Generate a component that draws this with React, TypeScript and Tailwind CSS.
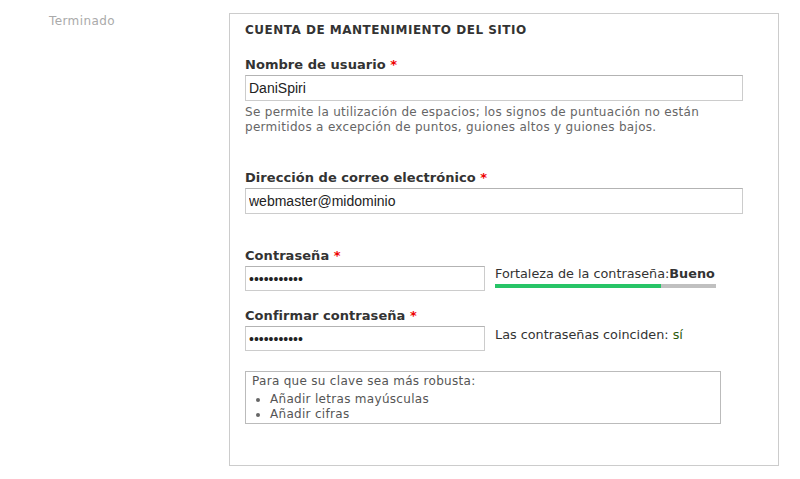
import React from 'react';

const Req = () => <span className="text-[#e00]"> *</span>;

const inputCls =
  'block border border-[#ccc] border-t-[#b3b3b3] bg-white px-[3px] text-[14px] text-[#222] font-["Liberation_Sans",Arial,sans-serif] outline-none';

const labelCls = 'block text-[13px] font-bold tracking-[0.05px] leading-[18px] text-[#333]';

const App: React.FC = () => {
  return (
    <div className="w-[800px] h-[479px] bg-white flex font-['DejaVu_Sans',sans-serif] text-[#333] overflow-hidden">
      <div className="w-[229px] shrink-0 pt-[13px] pl-[49px]">
        <div className="text-[12px] leading-[16px] tracking-[0.4px] text-[#aaa]">Terminado</div>
      </div>

      <div className="mt-[13px] w-[550px] h-[453px] border border-[#ccc] px-[15px] pt-[7px]">
        <h2 className="text-[12px] font-bold uppercase tracking-[0.5px] text-[#333] leading-[18px]">
          Cuenta de mantenimiento del sitio
        </h2>

        <div className="mt-[17px]">
          <label className={labelCls + ' mb-[1px]'}>
            Nombre de usuario<Req />
          </label>
          <input className={inputCls + ' h-[26px] w-[498px]'} defaultValue="DaniSpiri" />
          <p className="mt-[4px] text-[12px] leading-[15px] tracking-[0.3px] text-[#666]">
            Se permite la utilización de espacios; los signos de puntuación no están
            <br />
            permitidos a excepción de puntos, guiones altos y guiones bajos.
          </p>
        </div>

        <div className="mt-[34px]">
          <label className={labelCls + ' mb-[1px]'}>
            Dirección de correo electrónico<Req />
          </label>
          <input className={inputCls + ' h-[26px] w-[498px]'} defaultValue="webmaster@midominio" />
        </div>

        <div className="mt-[33px]">
          <label className={labelCls + ' mb-[1px]'}>
            Contraseña<Req />
          </label>
          <div className="flex items-start gap-[10px]">
            <input type="password" className={inputCls + ' h-[25px] w-[240px]'} defaultValue="abcdefghijk" />
            <div className="w-[221px]">
              <div className="whitespace-nowrap text-[12.8px] leading-[16px] text-[#333]">
                Fortaleza de la contraseña:<b>Bueno</b>
              </div>
              <div className="mt-[2px] h-[4px] w-[221px] bg-[#c0c0c0] flex">
                <div className="h-full w-[166px] bg-[#27c467]" />
              </div>
            </div>
          </div>
        </div>

        <div className="mt-[16px]">
          <label className={labelCls + ' mb-[1px]'}>
            Confirmar contraseña<Req />
          </label>
          <div className="flex items-start gap-[10px]">
            <input type="password" className={inputCls + ' h-[25px] w-[240px]'} defaultValue="abcdefghijk" />
            <div className="pt-[1px] whitespace-nowrap text-[12.8px] leading-[16px] text-[#333]">
              Las contraseñas coinciden: <span className="text-[#2b5a0c]">sí</span>
            </div>
          </div>
        </div>

        <div className="mt-[20px] w-[476px] border border-[#bbb] px-[6px] pt-[1px] pb-[1px] text-[12px] tracking-[0.3px] text-[#555]">
          <div className="leading-[16px]">Para que su clave sea más robusta:</div>
          <ul className="mt-[3px] list-disc pl-[18px] leading-[15px] marker:text-[#666]">
            <li>Añadir letras mayúsculas</li>
            <li>Añadir cifras</li>
          </ul>
        </div>
      </div>
    </div>
  );
};

export default App;
